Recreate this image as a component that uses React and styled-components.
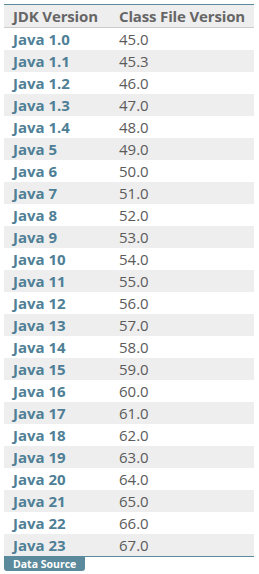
import React from 'react';
import styled, { createGlobalStyle } from 'styled-components';

const GlobalStyle = createGlobalStyle`
  html, body {
    margin: 0;
    padding: 0;
    background: #fff;
    font-family: "Open Sans", "Liberation Sans", sans-serif;
  }
`;

const Wrap = styled.div`
  padding: 4px 5px 0 4px;
`;

const Table = styled.table`
  width: 100%;
  border-collapse: collapse;
  border-top: 1px solid #5a8a9b;
  border-bottom: 1px solid #5a8a9b;
  font-size: 15px;
`;

const HeadCell = styled.th`
  height: 22px;
  padding: 0 0 0 9px;
  text-align: left;
  background: #eeeeee;
  color: #666;
  font-weight: 700;
  letter-spacing: -0.15px;
  border-bottom: 1px solid #ccc;
  line-height: 22px;
`;

const Row = styled.tr`
  background: ${(p) => (p.$odd ? '#eeeeee' : '#fff')};
`;

const NameCell = styled.td`
  height: 22px;
  padding: 0 0 0 9px;
  width: 97px;
  color: #4f7f96;
  font-weight: 700;
  line-height: 22px;
`;

const ValueCell = styled.td`
  padding: 0 0 0 9px;
  color: #5b5b5b;
  line-height: 22px;
`;

const SourceTab = styled.div`
  width: fit-content;
  padding: 0 9px 0 9px;
  background: #5a8a9b;
  color: #fff;
  font-size: 10.5px;
  font-weight: 700;
  line-height: 14px;
  border-radius: 0 0 3px 3px;
`;

const names = ['1.0', '1.1', '1.2', '1.3', '1.4'];
for (let i = 5; i <= 23; i += 1) names.push(String(i));
const values = ['45.0', '45.3', '46.0', '47.0', '48.0'];
for (let i = 49; i <= 67; i += 1) values.push(`${i}.0`);

const App = () => (
  <Wrap>
    <GlobalStyle />
    <Table>
      <thead>
        <tr>
          <HeadCell>JDK Version</HeadCell>
          <HeadCell>Class File Version</HeadCell>
        </tr>
      </thead>
      <tbody>
        {names.map((n, i) => (
          <Row key={n} $odd={i % 2 === 1}>
            <NameCell>{`Java ${n}`}</NameCell>
            <ValueCell>{values[i]}</ValueCell>
          </Row>
        ))}
      </tbody>
    </Table>
    <SourceTab>Data Source</SourceTab>
  </Wrap>
);

export default App;
